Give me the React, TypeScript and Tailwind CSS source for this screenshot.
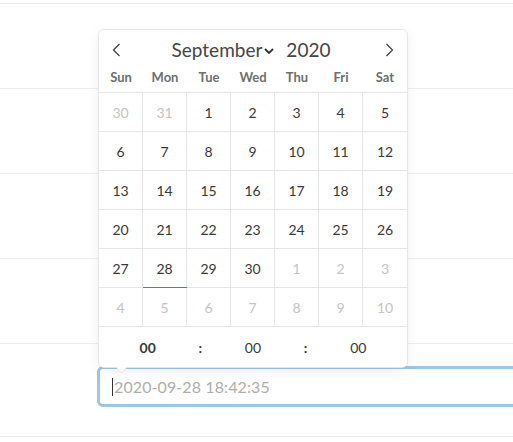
import { useState } from "react";

const weekdays = ["Sun", "Mon", "Tue", "Wed", "Thu", "Fri", "Sat"];

type Day = { n: number; muted?: boolean; today?: boolean };

function buildDays(): Day[] {
  const days: Day[] = [{ n: 30, muted: true }, { n: 31, muted: true }];
  for (let i = 1; i <= 30; i++) days.push({ n: i, today: i === 28 });
  for (let i = 1; i <= 10; i++) days.push({ n: i, muted: true });
  return days;
}

function Chevron({ dir }: { dir: "left" | "right" }) {
  return (
    <svg width="9" height="14" viewBox="0 0 9 14" fill="none" stroke="#3c3c3c" strokeWidth="1.2">
      {dir === "left" ? <path d="M7.5 1 1.5 7l6 6" /> : <path d="M1.5 1l6 6-6 6" />}
    </svg>
  );
}

export default function App() {
  const [value] = useState("");
  const days = buildDays();
  const weeks = [0, 1, 2, 3, 4, 5].map((w) => days.slice(w * 7, w * 7 + 7));

  return (
    <div className="relative w-[513px] h-[442px] overflow-hidden bg-white font-['Lato','Open_Sans',sans-serif] text-[#393939]">
      {/* table rows behind */}
      <div className="pt-[3px]">
        <div className="h-[85px] border-t border-[#ececec]" />
        <div className="h-[85px] border-t border-[#ececec]" />
        <div className="h-[85px] border-t border-[#ececec]" />
        <div className="h-[85px] border-t border-[#ececec]" />
        <div className="h-[94px] border-t border-b border-[#ececec] pt-[22px] pl-[97px]">
          <div className="flex items-center w-[480px] h-[41px] rounded-[6px] border-[3px] border-[#99c6e9] pl-[12px] text-[16px]">
            <span className="w-px h-[18px] bg-[#333] mr-[1px]" />
            <span className="text-[#aeaeae] tracking-[0.1px]">{value || "2020-09-28 18:42:35"}</span>
          </div>
        </div>
      </div>

      {/* calendar popup */}
      <div className="absolute left-[99px] top-[30px] w-[308px] rounded-[5px] bg-white shadow-[1px_0_0_#e6e6e6,-1px_0_0_#e6e6e6,0_1px_0_#e6e6e6,0_-1px_0_#e6e6e6,0_3px_13px_rgba(0,0,0,0.08)]">
        <div className="flex items-center justify-between h-[38px] px-[13px] pt-[1px]">
          <Chevron dir="left" />
          <div className="flex items-center text-[19px] leading-none text-[#454545] -ml-[4px]">
            <span>September</span>
            <svg width="12" height="8" viewBox="0 0 12 8" className="ml-[1px] mt-[2px]">
              <path d="M2 2l4 4 4-4" stroke="#333" strokeWidth="1.8" fill="none" />
            </svg>
            <span className="ml-[11px]">2020</span>
          </div>
          <Chevron dir="right" />
        </div>
        <div className="grid grid-cols-7 h-[24px] items-start text-[13px] leading-none font-bold text-[#6e6e6e]">
          {weekdays.map((d) => (
            <div key={d} className="text-center pt-[3px]">
              {d}
            </div>
          ))}
        </div>
        <div className="border-t border-[#e6e6e6]">
          {weeks.map((week, wi) => (
            <div key={wi} className="grid grid-cols-7 h-[39px] border-b border-[#e6e6e6]">
              {week.map((d, di) => (
                <div
                  key={di}
                  className={`relative flex items-center justify-center text-[14px] ${di < 6 ? "border-r border-[#e6e6e6]" : ""} ${d.muted ? "text-[#c4c4c4]" : "text-[#393939]"} ${d.today ? "shadow-[0_1px_0_#ff3b3b]" : ""}`}
                >
                  {d.n}
                </div>
              ))}
            </div>
          ))}
        </div>
        <div className="flex items-center h-[40px] text-[14px]">
          <div className="flex-1 text-center font-bold">00</div>
          <div className="w-[8px] text-center font-bold">:</div>
          <div className="flex-1 text-center">00</div>
          <div className="w-[8px] text-center font-bold">:</div>
          <div className="flex-1 text-center">00</div>
        </div>
        <span className="absolute left-[19px] -bottom-[4px] w-[7px] h-[7px] rotate-45 bg-white shadow-[1px_1px_0_#e6e6e6]" />
      </div>
    </div>
  );
}
